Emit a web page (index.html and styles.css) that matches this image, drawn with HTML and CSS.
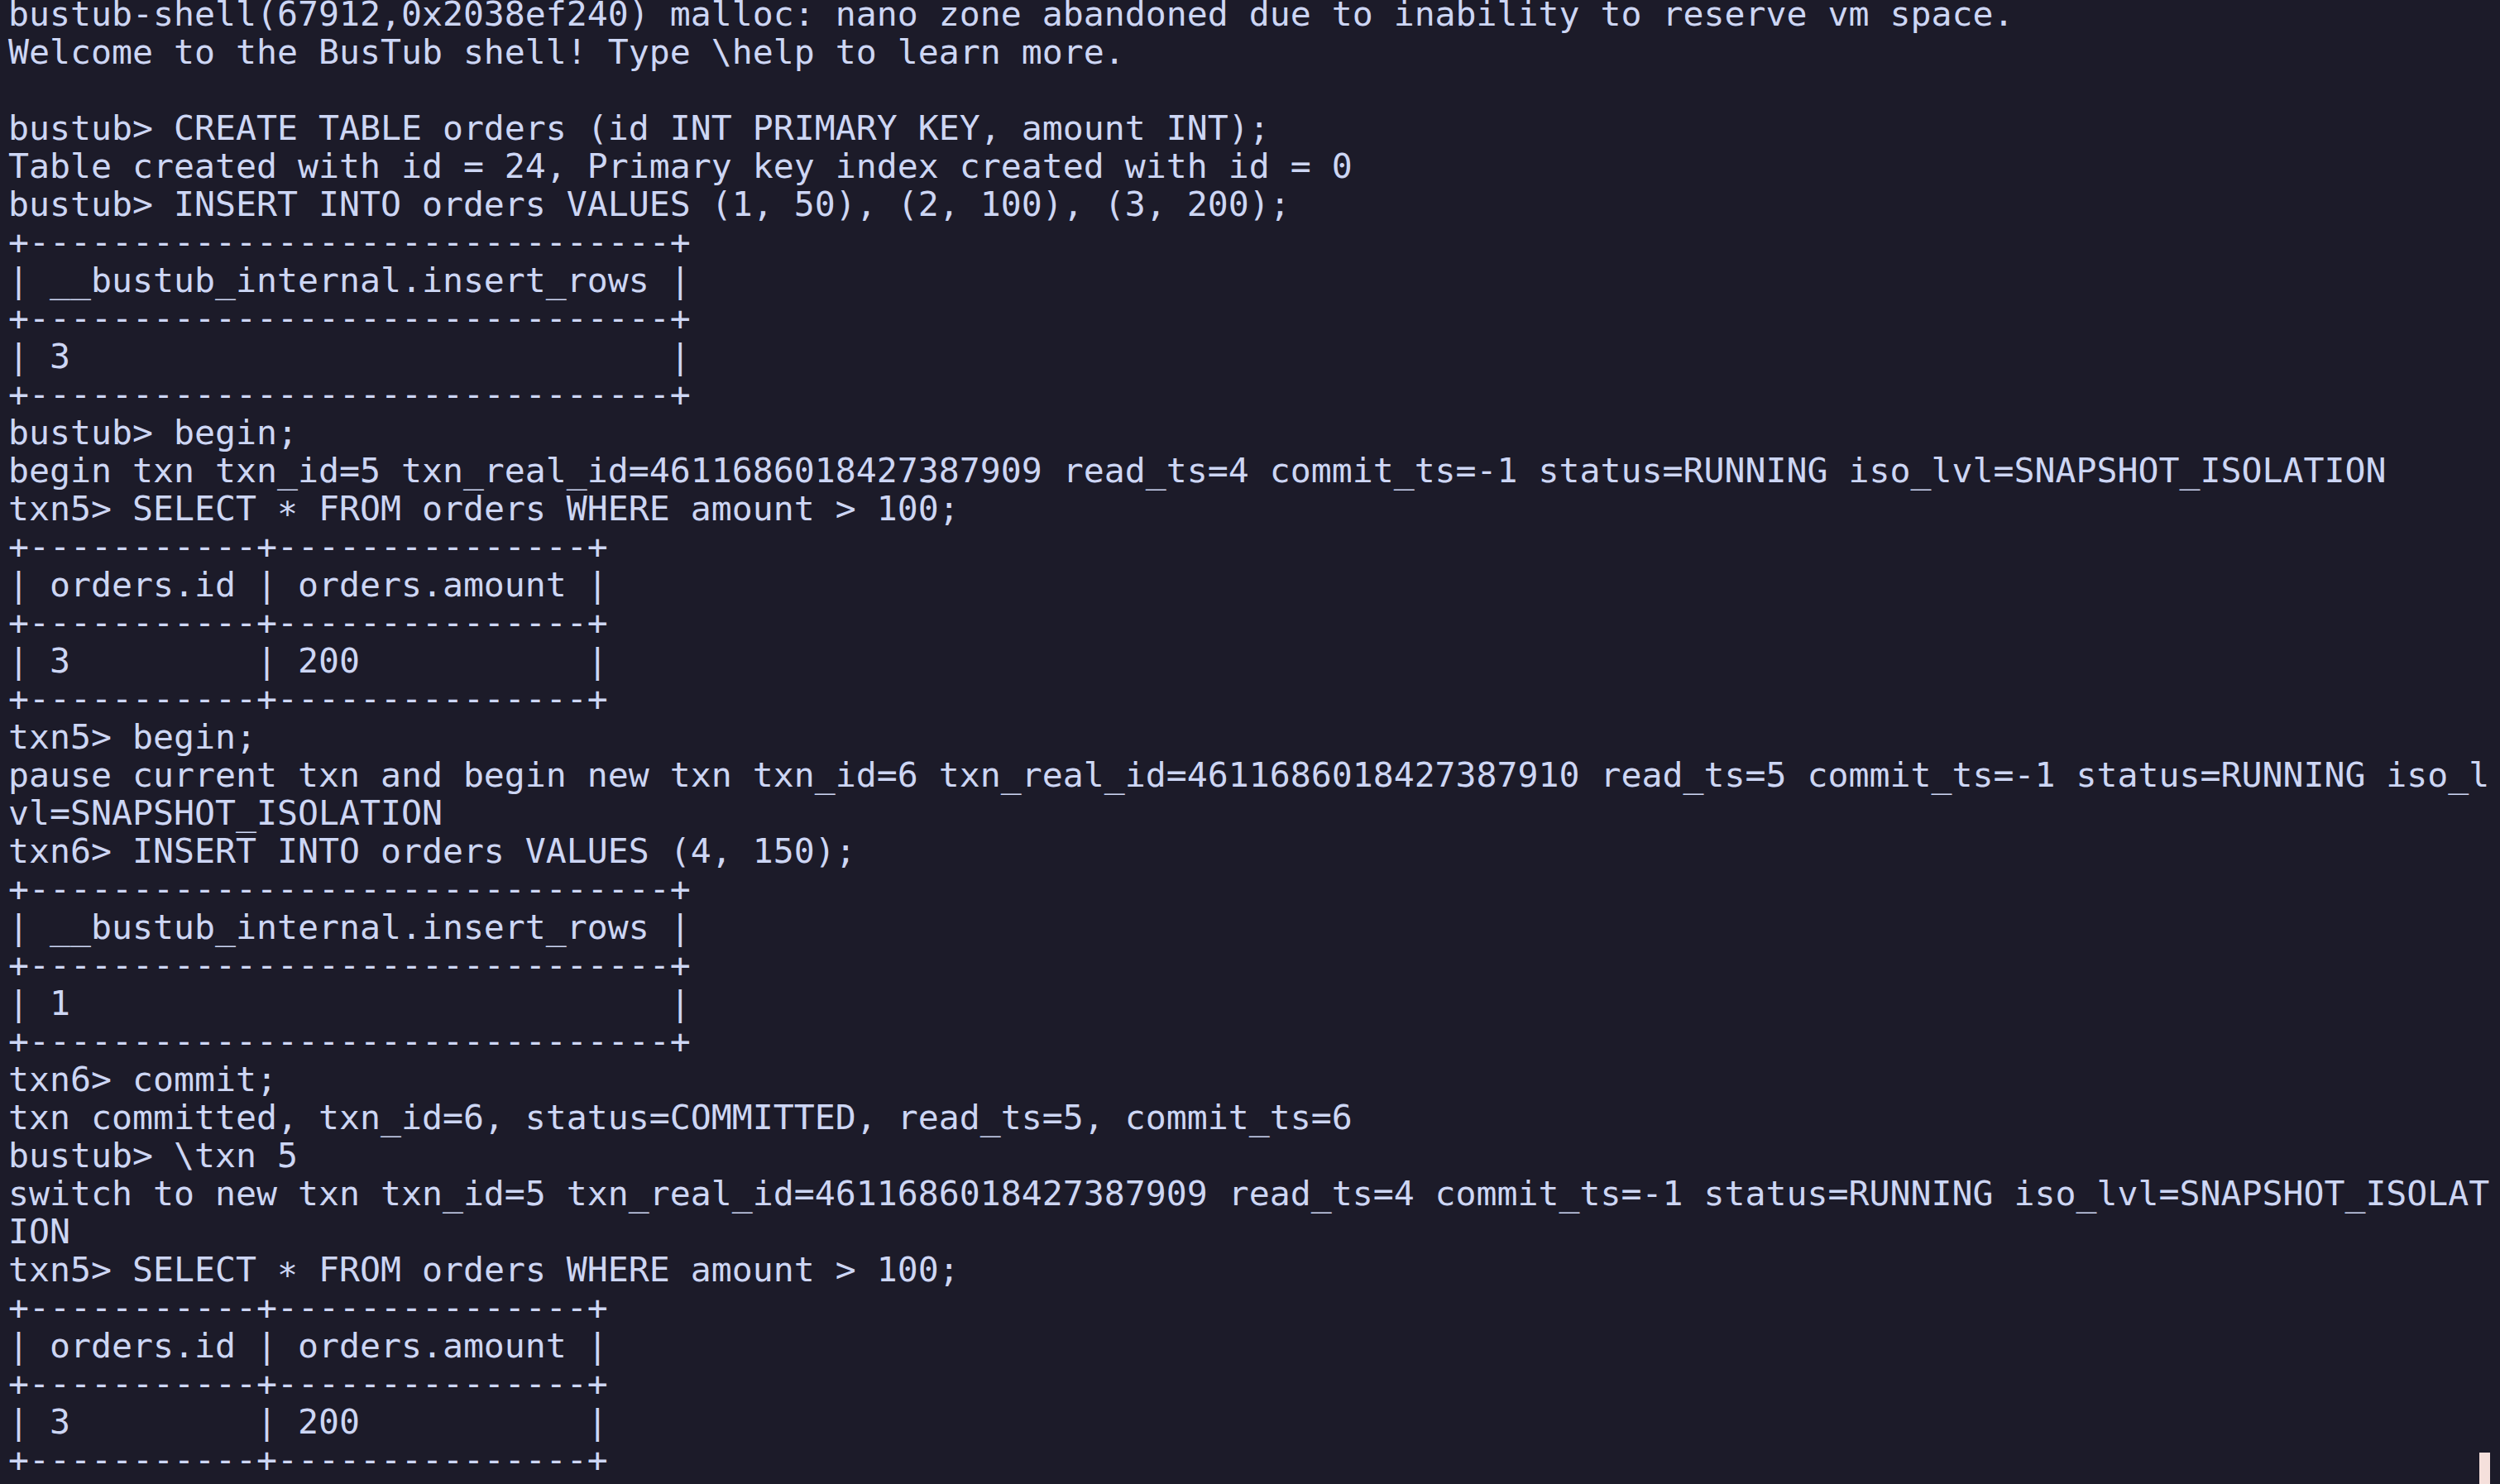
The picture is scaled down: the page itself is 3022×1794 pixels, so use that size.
FILE: index.html
```html
<!DOCTYPE html>
<html lang="en">
<head>
<meta charset="utf-8">
<title>bustub-shell</title>
<link rel="stylesheet" href="styles.css">
</head>
<body>
<main class="terminal">
<pre class="output">bustub-shell(67912,0x2038ef240) malloc: nano zone abandoned due to inability to reserve vm space.
Welcome to the BusTub shell! Type \help to learn more.

bustub&gt; CREATE TABLE orders (id INT PRIMARY KEY, amount INT);
Table created with id = 24, Primary key index created with id = 0
bustub&gt; INSERT INTO orders VALUES (1, 50), (2, 100), (3, 200);
+-------------------------------+
| __bustub_internal.insert_rows |
+-------------------------------+
| 3                             |
+-------------------------------+
bustub&gt; begin;
begin txn txn_id=5 txn_real_id=4611686018427387909 read_ts=4 commit_ts=-1 status=RUNNING iso_lvl=SNAPSHOT_ISOLATION
txn5&gt; SELECT <span class="ast">*</span> FROM orders WHERE amount &gt; 100;
+-----------+---------------+
| orders.id | orders.amount |
+-----------+---------------+
| 3         | 200           |
+-----------+---------------+
txn5&gt; begin;
pause current txn and begin new txn txn_id=6 txn_real_id=4611686018427387910 read_ts=5 commit_ts=-1 status=RUNNING iso_l
vl=SNAPSHOT_ISOLATION
txn6&gt; INSERT INTO orders VALUES (4, 150);
+-------------------------------+
| __bustub_internal.insert_rows |
+-------------------------------+
| 1                             |
+-------------------------------+
txn6&gt; commit;
txn committed, txn_id=6, status=COMMITTED, read_ts=5, commit_ts=6
bustub&gt; \txn 5
switch to new txn txn_id=5 txn_real_id=4611686018427387909 read_ts=4 commit_ts=-1 status=RUNNING iso_lvl=SNAPSHOT_ISOLAT
ION
txn5&gt; SELECT <span class="ast">*</span> FROM orders WHERE amount &gt; 100;
+-----------+---------------+
| orders.id | orders.amount |
+-----------+---------------+
| 3         | 200           |
+-----------+---------------+</pre>
<span class="cursor"></span>
</main>
</body>
</html>
```

FILE: styles.css
```css
html, body {
  margin: 0;
  padding: 0;
  background: #1c1b29;
  width: 3022px;
  height: 1794px;
  overflow: hidden;
}

.terminal {
  position: relative;
  width: 3022px;
  height: 1794px;
  box-sizing: border-box;
  padding: 0 0 0 10px;
}

.output {
  margin: -6px 0 0 0;
  font-family: "DejaVu Sans Mono", monospace;
  font-size: 41.52px;
  line-height: 46px;
  color: #cdd6f4;
  white-space: pre;
}

.ast {
  display: inline-block;
  transform: translateY(7px);
}

.cursor {
  position: absolute;
  left: 2997px;
  top: 1762px;
  width: 13px;
  height: 40px;
  background: #f5e0dc;
}
```
